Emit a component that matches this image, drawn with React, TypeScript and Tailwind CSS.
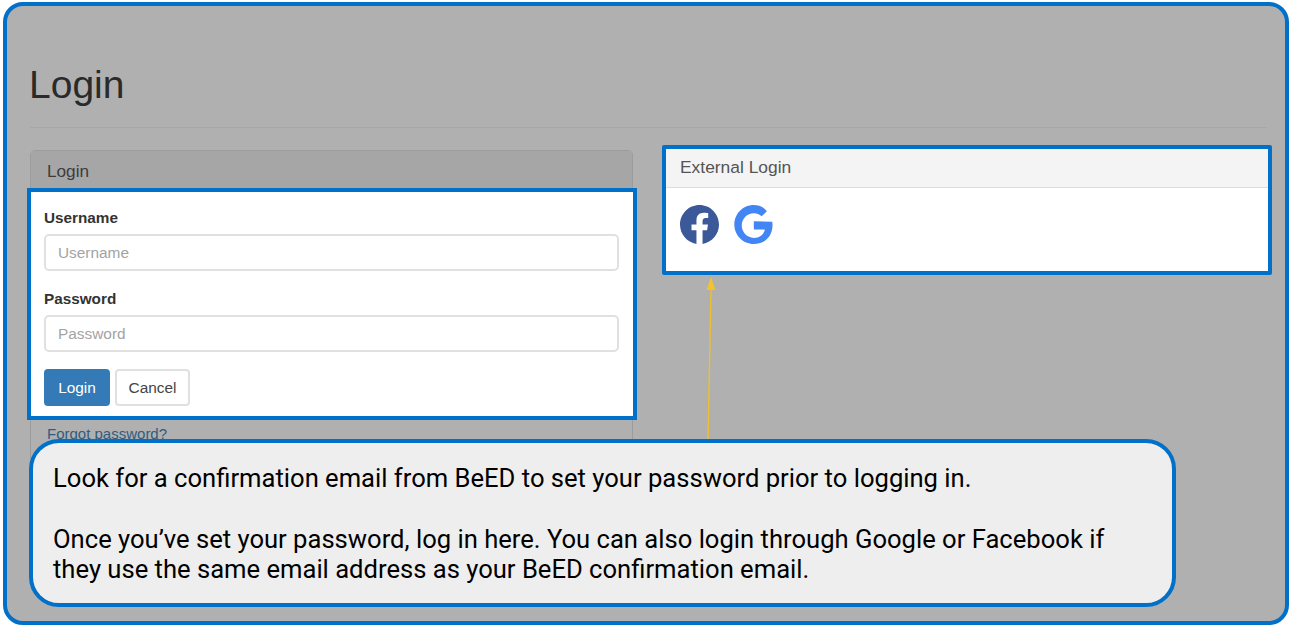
import React from "react";

const arial = "font-['Liberation_Sans',Arial,sans-serif]";

function Field({ label, hint }: { label: string; hint: string }) {
  return (
    <div className="flex flex-col">
      <div className="h-[19px] text-[15.3px] leading-[19px] font-bold text-[#333]">{label}</div>
      <div className="mt-[7px] flex h-[37px] items-center rounded-[5px] border-2 border-[#e0e0e0] bg-white pl-[12px] text-[15.4px] text-[#a3a3a3]">
        {hint}
      </div>
    </div>
  );
}

function Facebook() {
  return (
    <svg width="39" height="39" viewBox="0 0 24 24" aria-hidden="true">
      <path
        fill="#3b5998"
        d="M24 12.07C24 5.4 18.63 0 12 0S0 5.4 0 12.07c0 6.03 4.39 11.02 10.13 11.93v-8.44H7.08v-3.49h3.05V9.41c0-3.02 1.79-4.69 4.53-4.69 1.31 0 2.69.24 2.69.24v2.97h-1.51c-1.49 0-1.96.93-1.96 1.89v2.25h3.33l-.53 3.49h-2.8V24C19.61 23.09 24 18.1 24 12.07z"
      />
    </svg>
  );
}

function Google() {
  return (
    <svg width="39" height="39" viewBox="0.7 -0.4 22.7 23.1" aria-hidden="true">
      <path
        fill="#4285f4"
        d="M12.24 10.29v3.89h6.54c-.26 1.67-1.95 4.9-6.54 4.9-3.94 0-7.15-3.26-7.15-7.28s3.21-7.28 7.15-7.28c2.24 0 3.74.96 4.6 1.78l3.13-3.02C17.96 .69 15.36-.4 12.24-.4 5.86-.4.7 4.76.7 11.14s5.16 11.54 11.54 11.54c6.66 0 11.08-4.68 11.08-11.27 0-.76-.08-1.34-.18-1.92l-10.9-.2z"
      />
    </svg>
  );
}

export default function App() {
  return (
    <div className={`h-[627px] w-[1292px] overflow-hidden bg-white pl-[3px] pt-[2px] ${arial}`}>
      <div className="relative h-[623px] w-[1286px] overflow-hidden rounded-[20px] border-4 border-[#0070c9] bg-[#b0b0b0] pl-[23px] pr-[18px]">
        <div className="flex h-[122px] flex-col border-b border-[#a6a6a6]">
          <h1 className="-ml-[1px] mt-[55px] text-[39px] leading-[48px] text-[#2a2a2a]">Login</h1>
        </div>

        <div className="mt-[22px] flex items-start gap-[29px]">
          <div className="h-[320px] w-[603px] shrink-0 rounded-t-[5px] border border-[#9c9c9c]">
            <div className="flex h-[37px] items-center bg-[#a6a6a6] pl-[16px] pt-[5px] text-[17.2px] text-[#3c3c3c]">Login</div>
            <div className="relative z-10 -ml-[4px] flex h-[232px] w-[610px] flex-col border-4 border-[#0070c9] bg-white pl-[13px] pr-[14px] pt-[16px]">
              <div className="flex flex-col gap-[18px]">
                <Field label="Username" hint="Username" />
                <Field label="Password" hint="Password" />
              </div>
              <div className="mt-[17px] flex gap-[5px] text-[15.4px]">
                <div className="flex h-[37px] w-[66px] items-center justify-center rounded-[4px] bg-[#337ab7] text-white">Login</div>
                <div className="flex h-[37px] w-[75px] items-center justify-center rounded-[4px] border-2 border-[#e0e0e0] text-[#444]">Cancel</div>
              </div>
            </div>
            <div className="pl-[16px] pt-[5px] text-[15px] leading-[18px] text-[#2f5d7f]">Forgot password?</div>
          </div>

          <div className="-mt-[5px] flex h-[130px] w-[610px] shrink-0 flex-col rounded-[2px] border-4 border-[#0070c9] bg-white">
            <div className="flex h-[39px] items-center border-b border-[#dddddd] bg-[#f4f4f4] pb-[2px] pl-[14px] text-[17.4px] text-[#555]">External Login</div>
            <div className="flex gap-[15px] pl-[14px] pt-[17px]">
              <Facebook />
              <Google />
            </div>
          </div>
        </div>

        <svg className="absolute left-[697px] top-[270px]" width="14" height="170" viewBox="0 0 14 170" aria-hidden="true">
          <path d="M7 1 L2.5 14 L11.5 14 Z" fill="#f2c230" />
          <path d="M7 13 L4 165" stroke="#eebf2e" strokeWidth="1.4" fill="none" />
        </svg>

        <div className="absolute left-[22px] top-[433px] h-[168px] w-[1147px] rounded-[30px] border-4 border-[#0070c9] bg-[#eeeeee] pl-[20px] pt-[20px] font-['Roboto',sans-serif] text-[25.6px] leading-[30.3px] text-black">
          <p>Look for a confirmation email from BeED to set your password prior to logging in.</p>
          <p className="mt-[30.3px]">Once you’ve set your password, log in here. You can also login through Google or Facebook if</p>
          <p>they use the same email address as your BeED confirmation email.</p>
        </div>
      </div>
    </div>
  );
}
